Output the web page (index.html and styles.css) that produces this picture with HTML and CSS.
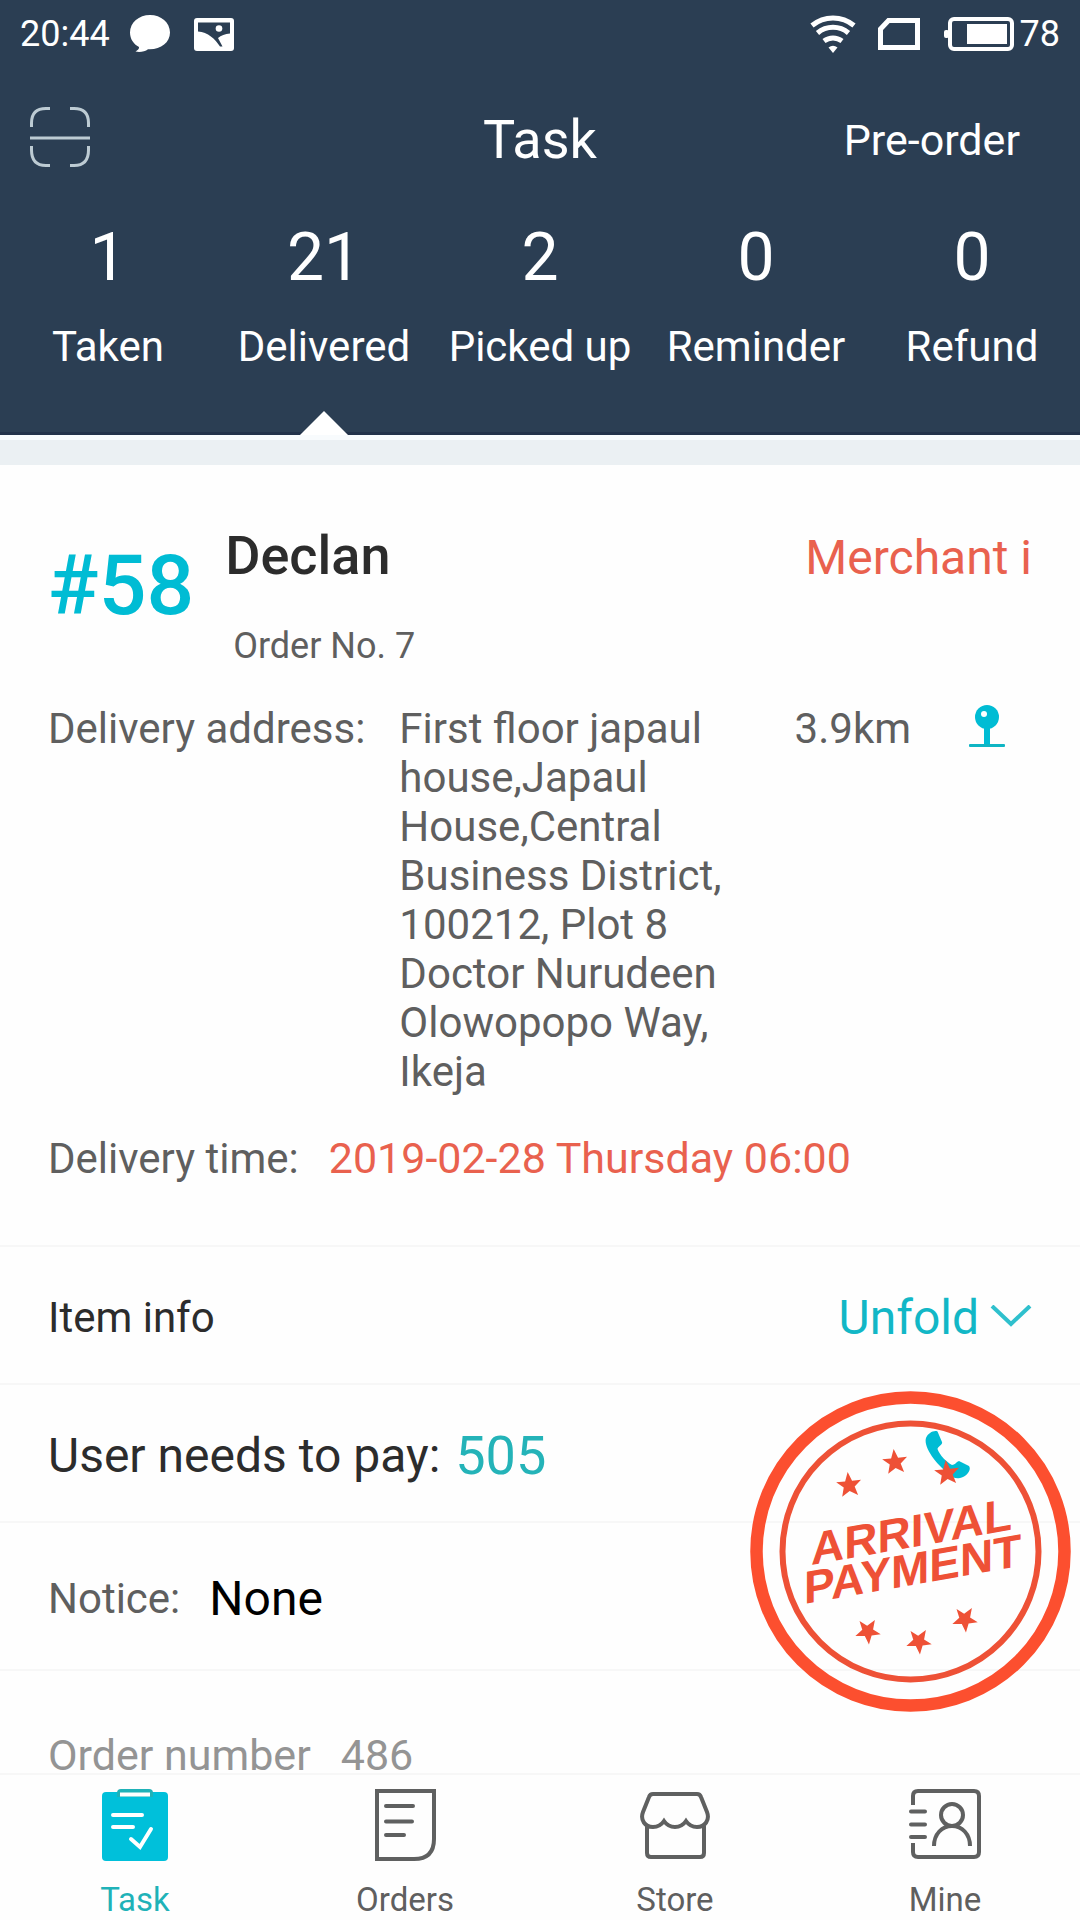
FILE: index.html
```html
<!DOCTYPE html>
<html lang="en">
<head>
<meta charset="utf-8">
<meta name="viewport" content="width=device-width, initial-scale=1">
<title>Task</title>
<link rel="stylesheet" href="styles.css">
</head>
<body>
<div class="app">
  <header class="header">
    <div class="status">
      <span>20:44</span>
      <svg class="status-chat" width="40" height="38" viewBox="0 0 40 38" aria-hidden="true"><path d="M20 0C9 0 0 7.500 0 17.500c0 6.500 3.500 11.500 9 14.500 .5 2-1.500 3-3.500 4.500 4.500 1 9.500 0 12.500-2.300C30 35 40 28 40 17.500 40 7.500 31 0 20 0z" fill="#fff"/></svg>
      <svg class="status-photo" width="40" height="33" viewBox="0 0 40 33" aria-hidden="true"><rect width="40" height="33" rx="3" fill="#fff"/><path d="M4 4.500h32v11c-5 .5-9 2-12 4.500l4.500 8.500h-2.500C21 21 14 14 4 13.500z" fill="#2b3e53"/><circle cx="25" cy="10.500" r="3.300" fill="#fff"/></svg>
      <span class="status-right">
        <svg width="46" height="39" viewBox="0 0 46 39" fill="none" stroke="#fff" stroke-width="5" aria-hidden="true"><path d="M2 10.500a33 33 0 0 1 42 0M7.500 18a24 24 0 0 1 31 0M14 26a15 15 0 0 1 18 0"/><path d="M23 38l-4.500-5.500q4.500-3.500 9 0z" fill="#fff" stroke="none"/></svg>
        <svg class="status-sim" width="42" height="32" viewBox="0 0 42 32" fill="none" stroke="#fff" stroke-width="5" aria-hidden="true"><path d="M2.500 29.500v-18.500l8-8.500h29v27z"/></svg>
        <svg class="status-battery" width="70" height="34" viewBox="0 0 70 34" aria-hidden="true"><rect x="6" y="2" width="62" height="30" rx="4" fill="none" stroke="#fff" stroke-width="4"/><rect x="0" y="13" width="5" height="8" rx="2" fill="#fff"/><rect x="23" y="7" width="40" height="20" fill="#fff"/></svg>
        <span>78</span>
      </span>
    </div>
    <div class="titlebar">
      <button class="scan" type="button" aria-label="Scan"><svg width="60" height="66" viewBox="0 0 60 66" fill="none" stroke="#bdcbd3" stroke-width="3" aria-hidden="true"><path d="M1.500 20V16Q1.500 1.500 16 1.500h4M40 1.500h4Q58.500 1.500 58.500 16v4M1.500 39v4Q1.500 58.500 16 58.500h4M40 58.500h4Q58.500 58.500 58.500 43v-4M0 31h60"/></svg></button>
      <h1 class="title">Task</h1>
      <a class="preorder" href="#preorder">Pre-order</a>
    </div>
    <nav class="stats" aria-label="Task states">
      <a class="stat" href="#taken"><span class="stat-count">1</span><span>Taken</span></a>
      <a class="stat stat-active" href="#delivered" aria-current="page"><span class="stat-count">21</span><span>Delivered</span></a>
      <a class="stat" href="#picked-up"><span class="stat-count">2</span><span>Picked up</span></a>
      <a class="stat" href="#reminder"><span class="stat-count">0</span><span>Reminder</span></a>
      <a class="stat" href="#refund"><span class="stat-count">0</span><span>Refund</span></a>
    </nav>
  </header>

  <main class="content">
    <section class="order">
      <div class="order-head">
        <span class="order-index">#58</span>
        <div class="order-who">
          <h2 class="order-name">Declan</h2>
          <p class="order-no">Order No. 7</p>
        </div>
        <span class="merchant">Merchant i</span>
      </div>
      <div class="address-row">
        <span>Delivery address:</span>
        <p class="address">First floor japaul house,Japaul House,Central Business District, 100212, Plot 8 Doctor Nurudeen Olowopopo Way, Ikeja</p>
        <span>3.9km</span>
        <a class="pin" href="#map" aria-label="Show on map"><svg width="36" height="43" viewBox="0 0 36 43" aria-hidden="true"><circle cx="18" cy="12" r="12" fill="#00bcd4"/><circle cx="15" cy="9" r="3" fill="#fff"/><path d="M15 22h6v18h-6z" fill="#00bcd4"/><rect y="39" width="36" height="3" rx="1" fill="#0fb5c4"/></svg></a>
      </div>
      <div class="time-row">
        <span>Delivery time:</span>
        <time class="time" datetime="2019-02-28T06:00">2019-02-28 Thursday 06:00</time>
      </div>
    </section>
    <section class="row">
      <span class="dark">Item info</span>
      <button class="unfold" type="button">Unfold<svg width="42" height="24" viewBox="0 0 42 24" fill="none" stroke="#2fc0cd" stroke-width="4" aria-hidden="true"><path d="M2 1l19 18L40 1"/></svg></button>
    </section>
    <section class="row pay">
      <span class="pay-label">User needs to pay:</span>
      <span class="pay-sum">505</span>
      <a class="phone" href="#call" aria-label="Call the customer"><svg width="46" height="50" viewBox="0 0 46 50" aria-hidden="true"><path d="M1 8C3 3 9 0 12.500 1.500L17 12c1 3-4 4-4.500 7 2 6 9 13 14.500 16 3 0 4-3 7-4l10 5c3 4-3 11-9 12-4 1-8-.5-11-4C13 36-2 18 1 8z" fill="#00bcd4"/></svg></a>
      <svg class="stamp" width="321" height="321" viewBox="0 0 321 321" role="img" aria-label="Arrival payment">
        <g fill="none" stroke="#fc4f2f">
          <circle cx="160.500" cy="160.500" r="154" stroke-width="12.500"/>
          <circle cx="160.500" cy="160.500" r="128" stroke-width="6" stroke="#ee5136"/>
        </g>
        <g class="stamp-ink">
          <text class="stamp-text" transform="translate(61 174) skewY(-10)">ARRIVAL</text>
          <text class="stamp-text" transform="translate(54 213) skewY(-10)">PAYMENT</text>
          <defs><path id="star" d="M0-13L3.500-4 12.500-4 5.500 2 8 11 0 6-8 11-5.500 2-12.500-4-3.500-4z"/></defs>
          <use href="#star" transform="translate(99 94) rotate(-6)"/>
          <use href="#star" transform="translate(145 71) rotate(-6)"/>
          <use href="#star" transform="translate(197 82) rotate(-6)"/>
          <use href="#star" transform="translate(118 240) rotate(32)"/>
          <use href="#star" transform="translate(169 250) rotate(32)"/>
          <use href="#star" transform="translate(215 228) rotate(32)"/>
        </g>
      </svg>
    </section>
    <section class="row notice">
      <span>Notice:</span>
      <span class="notice-text">None</span>
    </section>
    <section class="number">
      <span>Order number</span>
      <span>486</span>
    </section>
  </main>

  <nav class="tabs" aria-label="Main">
    <a class="tab tab-active" href="#task" aria-current="page">
      <svg width="66" height="72" viewBox="0 0 66 72" aria-hidden="true"><rect y="3" width="66" height="69" rx="4" fill="#00c0da"/><path d="M15 4q0-4 4-4h28q4 0 4 4v4H15z" fill="#1fb2b8"/><g fill="none" stroke="#fff"><path d="M18 5.500h30" stroke-width="4"/><path d="M11 26h29M11 38h20M29 50l9 8 11-18" stroke-width="4" stroke-linecap="round"/></g></svg>
      Task
    </a>
    <a class="tab" href="#orders">
      <svg width="61" height="72" viewBox="0 0 61 72" fill="none" stroke="#5f6060" stroke-width="4" aria-hidden="true"><path d="M2 2h57v48q0 20-20 20H2z"/><path d="M11 17h27M11 32.500h26M11 46h18" stroke-linecap="round"/></svg>
      Orders
    </a>
    <a class="tab" href="#store">
      <svg width="70" height="72" viewBox="0 0 70 72" fill="none" stroke="#5f6060" stroke-width="4" aria-hidden="true"><path d="M13 5h44q3 0 4 3l6 15c3 8-2 15-10 15q-7 0-11-6-4 6-11 6t-11-6q-4 6-11 6C5 38 0 31 3 23l6-15q1-3 4-3zM7 37v27q0 4 4 4h49q4 0 4-4V37"/></svg>
      Store
    </a>
    <a class="tab" href="#mine">
      <svg width="72" height="72" viewBox="0 0 72 72" fill="none" stroke="#5f6060" stroke-width="4" aria-hidden="true"><path d="M4 16V7q0-5 5-5h56q5 0 5 5v56q0 5-5 5H9q-5 0-5-5v-9"/><path d="M2 22.500h14M2 35.500h14M2 48h14" stroke-linecap="round"/><circle cx="43" cy="26" r="11"/><path d="M25 57c0-12 8-20 18-20s18 8 18 20"/></svg>
      Mine
    </a>
  </nav>
</div>
</body>
</html>
```
FILE: styles.css
```css
* {
  box-sizing: border-box;
}

body {
  margin: 0;
  background: #fefefe;
  color: #5f5f5f;
  font-family: Roboto, "Noto Sans", sans-serif;
  font-size: 42px;
  line-height: 49px;
}

h1,
h2,
p {
  margin: 0;
}

a {
  color: inherit;
  text-decoration: none;
}

button {
  padding: 0;
  border: 0;
  background: none;
  color: inherit;
  font: inherit;
}

svg {
  display: block;
}

.app {
  display: flex;
  flex-direction: column;
  height: 100vh;
}

/* Header */
.header {
  flex: none;
  border-bottom: 3px solid #22324a;
  background: #2b3e53;
  color: #fff;
}

.status {
  display: flex;
  align-items: center;
  height: 68px;
  padding: 0 20px;
  font-size: 36px;
}

.status-chat {
  margin-left: 20px;
}

.status-photo {
  margin-left: 24px;
}

.status-right {
  display: flex;
  align-items: center;
  margin-left: auto;
}

.status-sim {
  margin-left: 22px;
}

.status-battery {
  margin: 0 6px 0 24px;
}

.titlebar {
  display: grid;
  grid-template-columns: 1fr auto 1fr;
  align-items: center;
  height: 144px;
  padding: 0 60px 0 30px;
}

.scan {
  justify-self: start;
}

.title {
  padding-left: 30px;
  font-size: 54px;
  font-weight: 400;
  line-height: 64px;
}

.preorder {
  justify-self: end;
  font-size: 43px;
}

.stats {
  display: grid;
  grid-template-columns: repeat(5, 1fr);
}

.stat {
  position: relative;
  display: flex;
  flex-direction: column;
  align-items: center;
  gap: 24px;
  padding: 6px 0 61px;
  white-space: nowrap;
}

.stat-count {
  font-size: 66px;
  line-height: 80px;
}

.stat-active::after {
  content: "";
  position: absolute;
  bottom: -3px;
  left: calc(50% - 24px);
  border: solid transparent;
  border-width: 0 24px 24px;
  border-bottom-color: #fff;
}

/* Order */
.content {
  flex: 1;
  min-height: 0;
  overflow: hidden auto;
  scrollbar-width: none;
  border-top: 5px solid #f8fbfd;
}

.order {
  padding: 59px 48px 62px;
  border-top: 25px solid #ebf0f3;
}

.order-head {
  display: flex;
  align-items: flex-start;
}

.order-index {
  color: #00bcd4;
  font-size: 84px;
  font-weight: 500;
  line-height: 124px;
}

.order-who {
  margin-left: 31px;
}

.order-name {
  color: #2c2c2c;
  font-size: 54px;
  font-weight: 500;
  line-height: 64px;
}

.order-no {
  margin-top: 37px;
  padding-left: 8px;
  font-size: 36px;
  line-height: 42px;
}

.merchant {
  margin-left: auto;
  color: #e9614e;
  font-size: 48px;
  line-height: 68px;
}

.address-row {
  display: flex;
  align-items: flex-start;
  margin-top: 37px;
  white-space: nowrap;
}

.address {
  flex: 1;
  margin: 0 56px 0 34px;
  white-space: normal;
}

.pin {
  margin: 1px 27px 0 58px;
}

.time-row {
  display: flex;
  gap: 30px;
  margin-top: 38px;
}

.time {
  color: #e9614e;
  font-size: 43px;
}

.row {
  display: flex;
  align-items: center;
  min-height: 138px;
  padding: 4px 48px 0;
  border-top: 2px solid #f7f7f7;
}

.dark {
  color: #2c2c2c;
}

.unfold {
  display: flex;
  align-items: center;
  gap: 11px;
  margin-left: auto;
  color: #12b7c6;
  font-size: 48px;
}

.pay {
  position: relative;
}

.pay-label {
  color: #2c2c2c;
  font-size: 48px;
}

.pay-sum {
  margin-left: 15px;
  color: #24b3b8;
  font-size: 54px;
}

.phone {
  margin: 0 61px 0 auto;
}

.stamp {
  position: absolute;
  top: 6px;
  right: 9px;
  pointer-events: none;
}

.stamp-ink {
  fill: #ee5136;
}

.stamp-text {
  font-family: "Liberation Sans", sans-serif;
  font-size: 46px;
  font-weight: 700;
}

.notice {
  gap: 29px;
  min-height: 148px;
}

.notice-text {
  color: #000;
  font-size: 48px;
}

.number {
  display: flex;
  gap: 30px;
  padding: 67px 48px;
  border-top: 2px solid #f7f7f7;
  color: #949494;
  font-size: 43px;
  line-height: 35px;
}

/* Bottom tabs */
.tabs {
  display: grid;
  flex: none;
  grid-template-columns: repeat(4, 1fr);
  padding-top: 14px;
  border-top: 2px solid #f7f7f7;
}

.tab {
  display: flex;
  flex-direction: column;
  align-items: center;
  gap: 19px;
  font-size: 33px;
  line-height: 40px;
}

.tab-active {
  color: #1fb2b8;
}
```
